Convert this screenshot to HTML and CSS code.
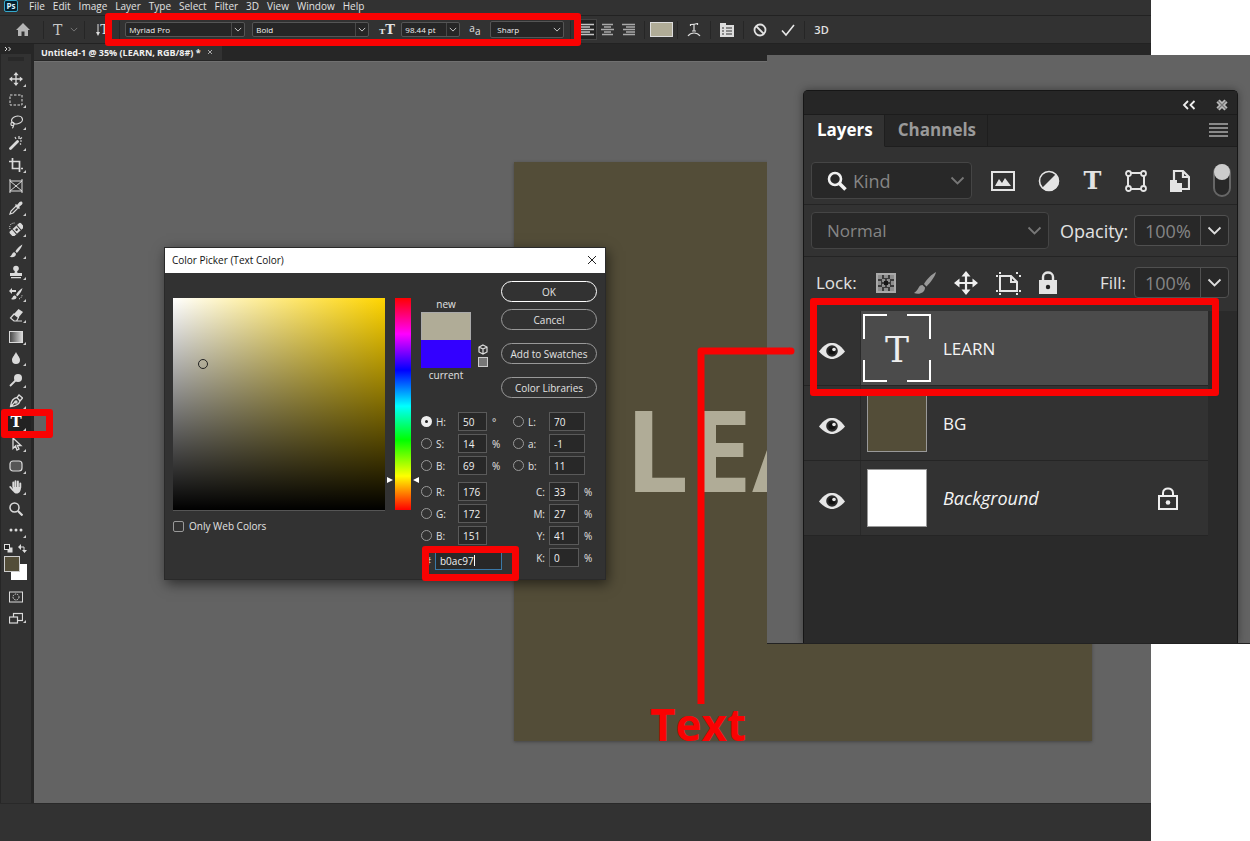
FILE: index.html
```html
<!DOCTYPE html>
<html lang="en">
<head>
<meta charset="utf-8">
<title>Untitled-1 @ 35% (LEARN, RGB/8#)</title>
<link rel="stylesheet" href="styles.css">
</head>
<body>
<svg class="defs" aria-hidden="true">
  <symbol id="chev" viewBox="0 0 10 6"><path d="M1 1l4 4 4-4" fill="none" stroke="currentColor" stroke-width="1.2"/></symbol>
  <symbol id="move" viewBox="0 0 24 24"><path d="M12 3v18M3 12h18" stroke="currentColor" stroke-width="2.2"/><path d="M12 0l4.500 5.500h-9zM12 24l-4.500-5.500h9zM0 12l5.500-4.500v9zM24 12l-5.500-4.500v9z" fill="currentColor"/></symbol>
  <symbol id="brush" viewBox="0 0 24 24"><path d="M23 1c-4 2-10 8-12 12l2.500 2.500C17 12 22 6 23 1zM9.500 14C5 14 6 19 1 22c5 2 11 0 11-5.500z" fill="currentColor"/></symbol>
  <symbol id="eye" viewBox="0 0 26 18"><path d="M0 9.500C5 2.500 9 1 13 1s8 1.500 13 8.500C21 15 17 17 13 17S5 15 0 9.500z" fill="#e6e6e6"/><circle cx="13" cy="9" r="5.800" fill="#2b2b2b"/><circle cx="13" cy="9" r="3.600" fill="#111"/><circle cx="15" cy="7.500" r="1.800" fill="#e6e6e6"/></symbol>
</svg>
<div class="screen">
<div class="app">
  <nav class="menubar" aria-label="Main menu">
    <span class="logo">Ps</span>
    <button>File</button><button>Edit</button><button>Image</button><button>Layer</button><button>Type</button><button>Select</button><button>Filter</button><button>3D</button><button>View</button><button>Window</button><button>Help</button>
  </nav>
  <div class="options">
    <button class="home" aria-label="Home"><svg width="14" height="14" viewBox="0 0 14 14"><path d="M7 0L0 7h2v6h3.500V8.500h3V13H12V7h2z" fill="#b5b5b5"/></svg></button>
    <i class="sep"></i>
    <button class="type-preset" aria-label="Type tool presets"><span class="serif-t">T</span><svg class="chev dim"><use href="#chev"/></svg></button>
    <i class="sep"></i>
    <button class="orient" aria-label="Text orientation"><svg width="4" height="12" viewBox="0 0 4 12"><path d="M2 0v9" stroke="#ddd"/><path d="M0 8h4L2 12z" fill="#ddd"/></svg><span class="serif-t">T</span></button>
    <i class="sep"></i>
    <div class="combo family"><select aria-label="Font family"><option>Myriad Pro</option></select><svg class="chev"><use href="#chev"/></svg></div>
    <div class="combo style"><select aria-label="Font style"><option>Bold</option></select><svg class="chev"><use href="#chev"/></svg></div>
    <span class="size-icon"><small>T</small>T</span>
    <div class="combo size"><input type="text" aria-label="Font size" value="98.44 pt"><svg class="chev"><use href="#chev"/></svg></div>
    <span class="aa-icon">a<small>a</small></span>
    <div class="combo aa plain"><select aria-label="Anti-aliasing"><option>Sharp</option></select><svg class="chev"><use href="#chev"/></svg></div>
    <i class="sep tight"></i>
    <button class="align on" aria-label="Left align"><svg width="13" height="13" viewBox="0 0 13 13"><path d="M0 1.500h13M0 4h9M0 6.500h13M0 9h9M0 11.500h13" stroke="#c4c4c4" stroke-width="1.600"/></svg></button>
    <button class="align" aria-label="Center"><svg width="13" height="13" viewBox="0 0 13 13"><path d="M1 1.500h11M3 4h7M0 6.500h13M3 9h7M1 11.500h11" stroke="#aaa" stroke-width="1.600"/></svg></button>
    <button class="align" aria-label="Right align"><svg width="13" height="13" viewBox="0 0 13 13"><path d="M0 1.500h13M4 4h9M1 6.500h12M4 9h9M1 11.500h12" stroke="#aaa" stroke-width="1.600"/></svg></button>
    <i class="sep"></i>
    <button class="color" aria-label="Text color"></button>
    <i class="sep"></i>
    <button class="opt" aria-label="Warp text"><svg width="14" height="14" viewBox="0 0 14 14" fill="none" stroke="#ddd" stroke-width="1.200"><path d="M3.500 3V1.500c3 0 4 0 7-1V2M7 1.500V8M5 8h4M1 13c3-4 9-4 12 0"/></svg></button>
    <i class="sep"></i>
    <button class="opt" aria-label="Character and paragraph panels"><svg width="14" height="14" viewBox="0 0 14 14"><path d="M0 0h6v2h8v12H0z" fill="#ddd"/><path d="M2 5h2M2 8h2M2 11h2M6 5h6M6 8h6M6 11h6" stroke="#333" stroke-width="1.200"/></svg></button>
    <i class="sep"></i>
    <button class="opt" aria-label="Cancel edits"><svg width="14" height="14" viewBox="0 0 14 14" fill="none" stroke="#e2e2e2" stroke-width="1.800"><circle cx="7" cy="7" r="5.500"/><path d="M3 3l8 8"/></svg></button>
    <button class="opt" aria-label="Commit edits"><svg width="14" height="14" viewBox="0 0 14 14" fill="none" stroke="#e8e8e8" stroke-width="1.600"><path d="M1 7.500l4 4.500L13 2"/></svg></button>
    <i class="sep"></i>
    <button class="three">3D</button>
  </div>
  <div class="work">
    <aside class="tools" aria-label="Tools">
      <button class="expand" aria-label="Expand"><svg width="8" height="6" viewBox="0 0 8 6"><path d="M1 1l2 2-2 2M4.500 1l2 2-2 2" fill="none" stroke="#ddd"/></svg></button>
      <div class="grip"></div>
      <div class="toollist">
        <button class="tool sub" aria-label="Move"><svg viewBox="0 0 24 24"><use href="#move"/></svg></button>
        <button class="tool sub" aria-label="Marquee"><svg viewBox="0 0 14 14"><rect x="1" y="2" width="12" height="10" fill="none" stroke="currentColor" stroke-dasharray="2.500 1.500"/></svg></button>
        <button class="tool sub" aria-label="Lasso"><svg viewBox="0 0 14 14" fill="none" stroke="currentColor" stroke-width="1.200"><ellipse cx="8" cy="5" rx="5.500" ry="3.800" transform="rotate(-12 8 5)"/><circle cx="3.500" cy="9" r="1.600"/><path d="M4 10c1 1 0 3-1 3"/></svg></button>
        <button class="tool sub" aria-label="Magic wand"><svg viewBox="0 0 14 14"><path d="M1.500 12.500l7-7" stroke="currentColor" stroke-width="2.800" stroke-linecap="round"/><path d="M6 1l1 2M10 0v3M13 5h-2M13 1.500L11 3M12 8.500l-1-1" stroke="currentColor" stroke-width="1.200"/></svg></button>
        <button class="tool sub" aria-label="Crop"><svg viewBox="0 0 14 14" fill="none" stroke="currentColor" stroke-width="1.700"><path d="M3.500 0v10.500H11M0 3.500h10.500V14M12 10.500h2"/></svg></button>
        <button class="tool" aria-label="Frame"><svg viewBox="0 0 14 14" fill="none" stroke="currentColor"><rect x="1" y="2" width="12" height="10"/><path d="M1 2l12 10M13 2L1 12M0 1h2M12 1h2M0 13h2M12 13h2"/></svg></button>
        <button class="tool sub" aria-label="Eyedropper"><svg viewBox="0 0 14 14"><path d="M1 13l1-3 5-5 2 2-5 5z" fill="none" stroke="currentColor" stroke-width="1.200"/><path d="M6 4l1-1 1 1 2.500-3c2-1.500 4 .5 2.500 2.500L10 6l1 1-1 1z" fill="currentColor"/></svg></button>
        <button class="tool sub" aria-label="Healing brush"><svg viewBox="0 0 14 14"><path d="M1 7C0 3 2 1 6 1" fill="none" stroke="currentColor" stroke-dasharray="1 1"/><g transform="rotate(-42 7.500 7.500)"><rect x="0" y="4.500" width="15" height="6.500" rx="1.500" fill="currentColor"/><path d="M4.500 4.500V11M10.500 4.500V11" stroke="#323232"/><circle cx="7.500" cy="7.700" r="1.300" fill="#323232"/></g></svg></button>
        <button class="tool sub" aria-label="Brush"><svg viewBox="0 0 24 24"><use href="#brush"/></svg></button>
        <button class="tool sub" aria-label="Clone stamp"><svg viewBox="0 0 14 14" fill="currentColor"><circle cx="7" cy="3.500" r="2.800"/><path d="M6 5h2l.5 3H13v3H1V8h4.500zM2 12h10v1.200H2z"/></svg></button>
        <button class="tool sub" aria-label="History brush"><svg viewBox="0 0 14 14"><path d="M13.500 1C10 3 8 6 7 8l1.500 1.300C10.500 7 13 4 13.500 1zM6 8.500c-2.500 0-2 2.500-4 3.500 3 1.500 6 0 5.500-2.200zM0 4l3-3v2h4v2H3v2z" fill="currentColor"/><path d="M10 12c2-1 3-2 3-4" fill="none" stroke="currentColor" stroke-dasharray="1 1"/></svg></button>
        <button class="tool sub" aria-label="Eraser"><svg viewBox="0 0 14 14"><path d="M5 6l4.500-5L14 4 9.500 9.500z" fill="currentColor"/><path d="M5 6L1.500 10 5 13h2.500l2-3.500zM7 13h6" fill="none" stroke="currentColor" stroke-width="1.200"/></svg></button>
        <button class="tool sub" aria-label="Gradient"><svg viewBox="0 0 14 14"><defs><linearGradient id="g"><stop stop-color="#444"/><stop offset="1" stop-color="#ddd"/></linearGradient></defs><rect x=".5" y="1.500" width="13" height="11" fill="url(#g)" stroke="currentColor"/></svg></button>
        <button class="tool sub" aria-label="Blur"><svg viewBox="0 0 14 14"><path d="M7 1c2 4 4 5.500 4 8a4 4 0 0 1-8 0c0-2.500 2-4 4-8z" fill="currentColor"/></svg></button>
        <button class="tool sub" aria-label="Dodge"><svg viewBox="0 0 14 14"><circle cx="9" cy="5" r="4" fill="currentColor"/><path d="M6.500 7.500L1 13" stroke="currentColor" stroke-width="1.800"/></svg></button>
        <button class="tool sub" aria-label="Pen"><svg viewBox="0 0 14 14" fill="none" stroke="currentColor" stroke-width="1.300"><path d="M1.500 12.500C2 8 4 4 8 3.500L11 7c-1 3.500-4 5-9.500 5.500zl5-5M8 3.500L10 1l3.500 3L11 7"/><circle cx="7" cy="8" r="1"/></svg></button>
        <button class="tool sub active" aria-label="Type"><span class="serif-t">T</span></button>
        <button class="tool sub" aria-label="Path selection"><svg viewBox="0 0 14 14" fill="none" stroke="currentColor" stroke-width="1.300"><path d="M4 1v10.500l2.500-2.500L8 13l2-1-1.700-3.500H12z"/></svg></button>
        <button class="tool sub" aria-label="Rounded rectangle"><svg viewBox="0 0 14 14"><rect x="1" y="2" width="12" height="10" rx="3" fill="#555" stroke="currentColor" stroke-width="1.200"/></svg></button>
        <button class="tool sub" aria-label="Hand"><svg viewBox="0 0 14 14" fill="none" stroke="currentColor" stroke-width="1.900" stroke-linecap="round"><path d="M4.300 7V2.500M6.500 7V1.200M8.900 7V1.500M11.300 7.500V3.500M1.300 7l3 3.500"/><path d="M4 7h8c0 4-1.500 6.500-4.500 6.500S4 11 4 9z" fill="currentColor" stroke="none"/></svg></button>
        <button class="tool" aria-label="Zoom"><svg viewBox="0 0 14 14" fill="none" stroke="currentColor"><circle cx="5.500" cy="5.500" r="4.500" stroke-width="1.500"/><path d="M9 9l4.500 4.500" stroke-width="2.200"/></svg></button>
        <button class="tool sub" aria-label="More tools"><svg viewBox="0 0 14 14" fill="currentColor"><circle cx="2" cy="7" r="1.500"/><circle cx="7" cy="7" r="1.500"/><circle cx="12" cy="7" r="1.500"/></svg></button>
      </div>
      <div class="swap">
        <button aria-label="Default colors"><svg width="9" height="9" viewBox="0 0 9 9"><rect x="3.500" y="3.500" width="5" height="5" fill="#ddd"/><rect x=".5" y=".5" width="5" height="5" fill="#222" stroke="#ddd"/></svg></button>
        <button aria-label="Switch colors"><svg width="9" height="9" viewBox="0 0 9 9"><path d="M1 3h5v4" fill="none" stroke="#ddd"/><path d="M0 3l3-3v6zM6.500 9l-2.500-3h5z" fill="#ddd"/></svg></button>
      </div>
      <div class="swatches"><button class="bgc" aria-label="Background color"></button><button class="fgc" aria-label="Foreground color"></button></div>
      <button class="tool mask" aria-label="Quick mask"><svg viewBox="0 0 14 14" fill="none" stroke="currentColor"><rect x=".5" y="2" width="13" height="10"/><circle cx="7" cy="7" r="3" stroke-dasharray="1.500 1"/></svg></button>
      <button class="tool sub" aria-label="Screen mode"><svg viewBox="0 0 14 14" stroke="currentColor" stroke-width="1.200" fill="#323232"><rect x="4.500" y="1.500" width="9" height="7"/><rect x=".5" y="5" width="8" height="6"/></svg></button>
    </aside>
    <main class="main">
      <div class="tabbar"><div class="doc-tab">Untitled-1 @ 35% (LEARN, RGB/8#) *<button aria-label="Close document"><svg width="6" height="6" viewBox="0 0 6 6"><path d="M1 1l4 4M5 1L1 5" stroke="#aaa"/></svg></button></div></div>
      <div class="canvas">
        <div class="artboard"><div class="art-text">LEARN</div></div>
        <section class="dialog" aria-label="Color Picker">
          <header>Color Picker (Text Color)<button aria-label="Close"><svg width="10" height="10" viewBox="0 0 10 10"><path d="M1 1l8 8M9 1L1 9" stroke="#222"/></svg></button></header>
          <div class="picker">
            <div class="pick-left">
              <div class="field"><i class="ring"></i></div>
              <label class="web"><input type="checkbox">Only Web Colors</label>
            </div>
            <div class="hue"><i class="arrow l"></i><i class="arrow r"></i></div>
            <div class="pick-right">
              <div class="upper">
                <div class="preview"><span>new</span><i class="new"></i><i class="cur"></i><span>current</span></div>
                <div class="warn"><svg width="10" height="11" viewBox="0 0 10 11" fill="none" stroke="#ddd" stroke-width="1.200"><path d="M5 1l4 2v5l-4 2-4-2V3zM1 3l4 2 4-2M5 5v5"/></svg><i></i></div>
                <div class="buttons"><button class="ok">OK</button><button>Cancel</button><button class="far">Add to Swatches</button><button class="far">Color Libraries</button></div>
              </div>
              <div class="values">
                <div class="col">
                  <div class="val"><input type="radio" name="c" id="rh" checked><label for="rh">H:</label><input type="text" aria-label="Hue" value="50"><span>°</span></div>
                  <div class="val"><input type="radio" name="c" id="rs"><label for="rs">S:</label><input type="text" aria-label="Saturation" value="14"><span>%</span></div>
                  <div class="val"><input type="radio" name="c" id="rb"><label for="rb">B:</label><input type="text" aria-label="Brightness" value="69"><span>%</span></div>
                  <div class="val group"><input type="radio" name="c" id="rr"><label for="rr">R:</label><input type="text" aria-label="Red" value="176"></div>
                  <div class="val"><input type="radio" name="c" id="rg"><label for="rg">G:</label><input type="text" aria-label="Green" value="172"></div>
                  <div class="val"><input type="radio" name="c" id="rbl"><label for="rbl">B:</label><input type="text" aria-label="Blue" value="151"></div>
                  <div class="hex"><label for="hex">#</label><div class="hexbox"><input type="text" id="hex" value="b0ac97"><i class="caret"></i></div></div>
                </div>
                <div class="col second">
                  <div class="val wide"><input type="radio" name="c" id="rl"><label for="rl">L:</label><input type="text" aria-label="Lightness" value="70"></div>
                  <div class="val wide"><input type="radio" name="c" id="ra"><label for="ra">a:</label><input type="text" aria-label="Lab a" value="-1"></div>
                  <div class="val wide"><input type="radio" name="c" id="rlb"><label for="rlb">b:</label><input type="text" aria-label="Lab b" value="11"></div>
                  <div class="val cmyk group"><label for="cc">C:</label><input type="text" id="cc" value="33"><span>%</span></div>
                  <div class="val cmyk"><label for="cm">M:</label><input type="text" id="cm" value="27"><span>%</span></div>
                  <div class="val cmyk"><label for="cy">Y:</label><input type="text" id="cy" value="41"><span>%</span></div>
                  <div class="val cmyk"><label for="ck">K:</label><input type="text" id="ck" value="0"><span>%</span></div>
                </div>
              </div>
            </div>
          </div>
        </section>
      </div>
    </main>
  </div>
  <footer class="status"></footer>
</div>

<div class="inset">
  <section class="panel" aria-label="Layers">
    <div class="panel-top">
      <button aria-label="Collapse"><svg width="14" height="10" viewBox="0 0 14 10"><path d="M6 1L2 5l4 4M12.500 1l-4 4 4 4" fill="none" stroke="#eee" stroke-width="1.800"/></svg></button>
      <button aria-label="Close"><svg width="12" height="12" viewBox="0 0 12 12"><path d="M2 2l8 8M10 2l-8 8" stroke="#bbb" stroke-width="4.500"/><path d="M2 2l8 8M10 2l-8 8" stroke="#777" stroke-width="1.200"/></svg></button>
    </div>
    <div class="tabs"><button class="current">Layers</button><button>Channels</button><button class="burger" aria-label="Panel menu"><svg width="19" height="14" viewBox="0 0 19 14"><path d="M0 1h19M0 5h19M0 9h19M0 13h19" stroke="#aaa" stroke-width="1.500"/></svg></button></div>
    <div class="row filter">
      <div class="drop kind"><svg class="mag" width="20" height="20" viewBox="0 0 20 20" fill="none" stroke="#f0f0f0"><circle cx="8" cy="8" r="6" stroke-width="2.600"/><path d="M12 12l6.500 6.500" stroke-width="3.600"/></svg><select aria-label="Filter kind"><option>Kind</option></select><svg class="chev big dim"><use href="#chev"/></svg></div>
      <div class="filters">
        <button aria-label="Pixel layers"><svg width="24" height="20" viewBox="0 0 24 20"><rect x="1" y="1" width="22" height="18" fill="none" stroke="#e4e4e4" stroke-width="2"/><path d="M4 15l4-7 3 4 3-5 6 8z" fill="#e4e4e4"/></svg></button>
        <button aria-label="Adjustment layers"><svg width="22" height="22" viewBox="0 0 22 22"><circle cx="11" cy="11" r="9.500" fill="none" stroke="#e4e4e4" stroke-width="1.600"/><path d="M18 4A9.900 9.900 0 1 1 4 18z" fill="#e4e4e4"/></svg></button>
        <button aria-label="Type layers"><span class="serif-t">T</span></button>
        <button aria-label="Shape layers"><svg width="22" height="22" viewBox="0 0 22 22" fill="none" stroke="#e4e4e4"><path d="M3 3h16v16H3z" stroke-width="2"/><g fill="#323232" stroke-width="1.800"><circle cx="3.500" cy="3.500" r="2.500"/><circle cx="18.500" cy="3.500" r="2.500"/><circle cx="3.500" cy="18.500" r="2.500"/><circle cx="18.500" cy="18.500" r="2.500"/></g></svg></button>
        <button aria-label="Smart objects"><svg width="20" height="24" viewBox="0 0 20 24"><path d="M4 11V2h9l6 6v12h-7M13 2v6h6" fill="none" stroke="#e4e4e4" stroke-width="2.200"/><path d="M0 11h7v3h5v9H0z" fill="#e4e4e4"/></svg></button>
        <button class="switch" aria-label="Toggle filtering"><i></i></button>
      </div>
    </div>
    <div class="row blend">
      <div class="drop normal"><select aria-label="Blend mode"><option>Normal</option></select><svg class="chev big dim"><use href="#chev"/></svg></div>
      <label for="op">Opacity:</label>
      <div class="pct"><input type="text" id="op" value="100%"><svg class="chev big"><use href="#chev"/></svg></div>
    </div>
    <div class="row lock">
      <span class="cap">Lock:</span>
      <div class="locks">
        <button aria-label="Lock transparent pixels"><svg width="20" height="20" viewBox="0 0 20 20"><path d="M1 1h18v18H1z" fill="#3c3c3c" stroke="#aaa" stroke-width="2"/><path d="M2 2h4v4H2zM14 2h4v4h-4zM6 6h3v3H6zM11 6h3v3h-3zM6 11h3v3H6zM11 11h3v3h-3zM2 14h4v4H2zM14 14h4v4h-4zM8 2h4v3H8zM2 8h3v4H2zM15 8h3v4h-3zM8 15h4v3H8z" fill="#8e8e8e"/><path d="M8 8h4v4H8z" fill="#161616"/></svg></button>
        <button class="grey" aria-label="Lock image pixels"><svg width="24" height="24"><use href="#brush"/></svg></button>
        <button aria-label="Lock position"><svg width="24" height="24"><use href="#move"/></svg></button>
        <button aria-label="Lock artboard nesting"><svg width="26" height="24" viewBox="0 0 26 24" fill="none" stroke="#e4e4e4" stroke-width="2"><path d="M5 5h11l6 6v9H5zM16 5v6h6"/><path d="M1 5h2M5 1v2M22 1v2M24 5h2M1 20h2M5 22v2M22 22v2M24 20h2"/></svg></button>
        <button aria-label="Lock all"><svg width="20" height="24" viewBox="0 0 20 24"><path d="M5 10V6c0-6 10-6 10 0v4" fill="none" stroke="#e4e4e4" stroke-width="2.400"/><path d="M1 9h18v14H1z" fill="#e4e4e4"/><circle cx="10" cy="16" r="2.200" fill="#222"/></svg></button>
      </div>
      <label for="fill">Fill:</label>
      <div class="pct"><input type="text" id="fill" value="100%"><svg class="chev big"><use href="#chev"/></svg></div>
    </div>
    <ul class="layers">
      <li class="selected"><button class="eye" aria-label="Toggle LEARN"><svg width="26" height="18"><use href="#eye"/></svg></button><div class="body"><div class="thumb type"><svg width="68" height="68" viewBox="0 0 68 68" fill="none" stroke="#fff" stroke-width="2"><path d="M1 25V1h23M44 1h23v24M67 46v21H44M24 67H1V46"/></svg><span class="serif-t">T</span></div><span class="name">LEARN</span></div></li>
      <li><button class="eye" aria-label="Toggle BG"><svg width="26" height="18"><use href="#eye"/></svg></button><div class="body"><div class="thumb olive"></div><span class="name">BG</span></div></li>
      <li><button class="eye" aria-label="Toggle Background"><svg width="26" height="18"><use href="#eye"/></svg></button><div class="body"><div class="thumb white"></div><span class="name"><em>Background</em></span><svg class="locked" width="20" height="23" viewBox="0 0 20 23" fill="none" stroke="#eee" stroke-width="2"><path d="M1 9h18v13H1zM5 9V6c0-6 10-6 10 0v3"/><circle cx="10" cy="15.500" r="2.300" fill="#eee" stroke="none"/></svg></div></li>
    </ul>
  </section>
</div>

<div class="mark mark-options"></div>
<div class="mark mark-tool"></div>
<div class="mark mark-hex"></div>
<div class="mark mark-layer"></div>
<svg class="leader" width="100" height="357" viewBox="0 0 100 357"><path d="M4 357V4h89" fill="none" stroke="#f90202" stroke-width="7" stroke-linejoin="round"/><circle cx="94" cy="4" r="3.500" fill="#f90202"/></svg>
<div class="caption">Text</div>
</div>
</body>
</html>
```
FILE: styles.css
```css
* { box-sizing: border-box; }
body { margin: 0; background: #fff; font-family: "Open Sans", "Noto Sans", sans-serif; font-size: 10px; color: #e2e2e2; }
button, input, select { font: inherit; color: inherit; margin: 0; padding: 0; border: 0; background: none; appearance: none; outline: 0; }
button { display: flex; align-items: center; justify-content: center; }
svg { display: block; flex: none; }
.defs { position: absolute; width: 0; height: 0; }
.screen { position: relative; min-height: 100vh; overflow: hidden; }
.app { display: flex; flex-direction: column; min-height: 100vh; margin-right: 99px; background: #323232; }

.menubar { display: flex; align-items: center; height: 15px; padding: 0 4px 3px; gap: 8px; }
.menubar button { line-height: 12px; }
.logo { width: 14px; height: 12px; margin-right: 3px; border: 1px solid #35a8cc; border-radius: 2px; background: #06202e; color: #d5f3ff; font-size: 8px; font-weight: 700; line-height: 10px; text-align: center; }

.options { display: flex; align-items: center; height: 29px; padding-left: 16px; border-top: 1px solid #222; border-bottom: 1px solid #222; }
.sep { width: 1px; height: 18px; background: #262626; margin: 0 9px; }
.sep.tight { margin: 0 6px; }
.home + .sep { margin: 0 9px 0 13px; }
.chev { width: 8px; height: 5px; color: #ccc; }
.chev.dim { color: #777; }
.chev.big { width: 15px; height: 9px; }
.serif-t { font-family: "DejaVu Serif", serif; line-height: 1; }
.type-preset { gap: 8px; }
.type-preset .serif-t { font-size: 14px; color: #c8c8c8; }
.type-preset + .sep { margin: 0 11px 0 6px; }
.orient .serif-t { font-size: 12px; }
.orient + .sep { margin: 0 5px 0 11px; }
.combo { display: flex; align-items: center; height: 15px; border: 1px solid #555; border-radius: 2px; background: #262626; font-size: 8px; margin-right: 7px; color: #f0f0f0; }
.combo select, .combo input { flex: 1; min-width: 0; height: 13px; padding-left: 3px; border-right: 1px solid #484848; }
.combo.plain select { border: 0; padding-left: 6px; }
.combo .chev { margin: 0 2px; }
.family { width: 120px; }
.style { width: 117px; margin-right: 10px; }
.size { width: 59px; margin-right: 9px; }
.aa { width: 74px; height: 17px; margin-right: 0; }
.size-icon { width: 22px; font: 700 13px/1 "DejaVu Serif", serif; }
.size-icon small { font-size: 8px; }
.aa-icon { width: 21px; font-size: 10px; line-height: 12px; }
.aa-icon small { font-size: 10px; vertical-align: sub; }
.align { width: 21px; height: 21px; }
.align.on { width: 20px; background: #222; border: 1px solid #444; }
.align + .sep { margin: 0 5px; }
.color { width: 23px; height: 15px; background: #b0ac97; border: 1px solid #ddd; }
.color + .sep { margin: 0 9px 0 4px; }
.opt + .opt { margin-left: 14px; }
.opt + .sep { margin: 0 9px; }
.three { font-size: 11px; font-weight: 600; }

.work { display: flex; flex: 1; }
.tools { display: flex; flex-direction: column; width: 34px; border-right: 3px solid #262626; border-left: 1px solid #262626; }
.expand { height: 10px; justify-content: flex-start; padding-left: 3px; background: #262626; }
.grip { height: 4px; width: 16px; margin: 3px 7px; background: #292929; }
.toollist { display: grid; grid-auto-rows: 1fr; height: 473px; margin-top: 4px; }
.tool { position: relative; width: 30px; color: #dadada; }
.tool svg { width: 14px; height: 14px; }
.tool .serif-t { font-size: 15px; font-weight: 700; color: #fff; }
.tool.active { background: #222; }
.sub::after { content: ""; position: absolute; right: 5px; bottom: 3px; border-left: 3px solid transparent; border-bottom: 3px solid #ccc; }
.swap { display: flex; gap: 5px; padding: 3px; }
.swatches { position: relative; height: 26px; }
.fgc, .bgc { position: absolute; width: 16px; height: 16px; }
.fgc { left: 3px; top: 0; background: #534d38; border: 1px solid #ccc; }
.bgc { left: 10px; top: 8px; background: #fff; }
.mask { margin: 8px 0; }
.main { display: flex; flex-direction: column; flex: 1; min-width: 0; }
.tabbar { height: 17px; background: #262626; }
.doc-tab { display: flex; align-items: center; gap: 6px; width: max-content; height: 16px; padding: 0 9px 0 7px; background: #323232; font-size: 9px; font-weight: 700; color: #f0f0f0; }
.canvas { position: relative; flex: 1; background: #636363; border-top: 1px solid #707070; }
.status { height: 38px; background: #323232; border-top: 1px solid #292929; }
.artboard { position: absolute; left: 480px; top: 100px; width: 578px; height: 579px; background: #534d38; box-shadow: 0 1px 3px #444; overflow: hidden; }
.art-text { width: 253px; padding: 210px 0 0 111px; color: #b0ac97; font-size: 113px; font-weight: 700; line-height: 152px; overflow: hidden; }

.dialog { position: absolute; left: 130px; top: 185px; width: 442px; height: 333px; background: #323232; border: 1px solid #2a2a2a; box-shadow: 2px 4px 12px #0008; }
.dialog header { display: flex; align-items: center; justify-content: space-between; height: 25px; padding: 0 8px 2px 7px; background: #fff; color: #111; }
.picker { display: flex; padding: 8px 8px 0; }
.pick-left { padding-top: 17px; }
.field { position: relative; width: 212px; height: 213px; border-bottom: 1px solid #555; background: linear-gradient(to top, #000, transparent), linear-gradient(to right, #fff, #ffd500); }
.ring { position: absolute; left: 25px; top: 61px; width: 10px; height: 10px; border: 1px solid #222; border-radius: 50%; }
.web { display: flex; align-items: center; gap: 5px; margin-top: 8px; }
.web input { width: 11px; height: 11px; border: 1px solid #999; border-radius: 2px; }
.hue { position: relative; width: 16px; height: 212px; margin: 17px 10px 0; background: linear-gradient(#f00, #f0f 17%, #00f 34%, #0ff 51%, #0f0 67%, #ff0 84%, #f00); }
.arrow { position: absolute; top: 179px; border: 3px solid transparent; }
.arrow.l { left: -8px; border-left: 6px solid #fff; border-right: 0; }
.arrow.r { right: -8px; border-right: 6px solid #fff; border-left: 0; }
.pick-right { flex: 1; }
.upper { display: flex; }
.preview { display: flex; flex-direction: column; align-items: center; width: 50px; padding-top: 16px; line-height: 15px; }
.preview .new { width: 50px; height: 28px; background: #b0ac97; border: 1px solid #aaa; border-bottom: 0; }
.preview .cur { width: 50px; height: 28px; background: #3300ff; }
.warn { display: flex; flex-direction: column; align-items: center; gap: 2px; width: 24px; padding-top: 63px; }
.warn i { width: 10px; height: 10px; background: #777; border: 1px solid #ccc; }
.buttons { display: flex; flex-direction: column; gap: 7px; flex: 1; margin-left: 6px; }
.buttons button { height: 21px; border: 1px solid #999; border-radius: 11px; }
.buttons .ok { border-color: #fff; }
.buttons .far { margin-top: 6px; }
.values { display: flex; justify-content: space-between; padding-top: 14px; }
.col { display: flex; flex-direction: column; gap: 3px; width: 84px; }
.val { display: grid; grid-template-columns: 15px 22px 29px 1fr; align-items: center; height: 19px; }
.val.group { margin-top: 4px; }
.val.wide { grid-template-columns: 15px 21px 36px; }
.val.cmyk { grid-template-columns: 36px 30px 1fr; }
.val.cmyk label { text-align: right; padding-right: 4px; }
.val span { padding-left: 5px; line-height: 12px; }
.val input[type="text"], .hexbox { width: 100%; height: 19px; padding-left: 4px; border: 1px solid #5a5a5a; background: #282828; color: #f0f0f0; }
input[type="radio"] { width: 11px; height: 11px; border: 1px solid #999; border-radius: 50%; }
input[type="radio"]:checked { border: 4px solid #eee; background: #222; }
.hex { display: flex; align-items: center; margin-top: 3px; }
.hex label { width: 14px; text-align: center; }
.hexbox { display: flex; align-items: center; width: 67px; border-color: #3a78a8; }
.hexbox input { width: 34px; }
.caret { width: 1px; height: 11px; background: #fff; }

.inset { position: absolute; right: 0; top: 55px; width: 483px; height: 589px; padding: 35px 12px 0 36px; background: #636363; border-bottom: 1px solid #222; overflow: hidden; }
.panel { display: flex; flex-direction: column; height: 100%; border: 1px solid #161616; border-bottom: 0; border-radius: 5px 5px 0 0; background: #323232; box-shadow: 0 0 8px #0006; font-size: 17px; overflow: hidden; }
.panel-top { display: flex; align-items: center; justify-content: flex-end; gap: 20px; height: 24px; padding: 4px 9px 0; background: #262626; border-bottom: 1px solid #1c1c1c; }
.tabs { display: flex; height: 32px; background: #262626; font-weight: 700; color: #9a9a9a; }
.tabs button { padding: 0 11px 2px 13px; border-right: 1px solid #1e1e1e; border-bottom: 1px solid #1e1e1e; }
.tabs .current { color: #fff; background: #323232; border-bottom-color: #323232; }
.tabs .burger { flex: 1; justify-content: flex-end; padding: 0 9px 2px 0; border-right: 0; }
.row { display: flex; align-items: center; height: 52px; padding: 0 8px 0 7px; border-bottom: 1px solid #242424; }
.filter { height: 58px; padding: 10px 6px 0 7px; }
.drop { display: flex; align-items: center; height: 37px; padding: 0 6px 0 15px; border: 1px solid #454545; border-radius: 4px; background: #282828; color: #858585; }
.drop select { flex: 1; min-width: 0; }
.kind { width: 161px; font-size: 18px; }
.kind .mag { margin-right: 6px; }
.filters { display: flex; align-items: center; justify-content: space-between; flex: 1; padding-left: 19px; }
.filters .serif-t { font-size: 24px; font-weight: 700; }
.filters .switch { width: 18px; height: 33px; align-items: flex-start; border: 2px solid #666; border-radius: 9px; background: #282828; }
.switch i { flex: none; width: 16px; height: 16px; margin-top: -2px; border-radius: 50%; background: #ccc; }
.normal { width: 238px; }
.blend label { flex: 1; padding-left: 11px; font-size: 18px; }
.pct { display: flex; align-items: center; width: 95px; height: 31px; border: 1px solid #505050; border-radius: 4px; background: #282828; font-size: 18px; color: #858585; }
.pct input { width: 66px; height: 29px; padding-left: 10px; border-right: 1px solid #505050; }
.pct .chev { margin: 0 auto; color: #ddd; }
.lock { height: 54px; padding-left: 12px; padding-bottom: 3px; border: 0; }
.locks { display: flex; align-items: center; gap: 17px; padding-left: 19px; }
.locks .grey { color: #999; }
.locks button { color: #f0f0f0; }
.lock label { flex: 1; padding-right: 8px; text-align: right; }
.layers { flex: 1; margin: 0; padding: 0 29px 0 0; list-style: none; background: #2a2a2a; }
.layers li { display: flex; height: 75px; background: #323232; border-bottom: 1px solid #252525; }
.eye { width: 57px; padding-top: 6px; border-right: 1px solid #292929; }
.body { display: flex; align-items: center; flex: 1; padding-left: 6px; }
.selected .body { padding-left: 2px; background: #4b4b4b; }
.thumb { width: 60px; height: 58px; border: 1px solid #999; }
.thumb.olive { background: #534d38; }
.thumb.white { background: #fff; }
.thumb.type { display: grid; place-items: center; width: 68px; height: 68px; border: 0; }
.thumb.type > * { grid-area: 1 / 1; }
.thumb .serif-t { font-size: 36px; padding-top: 4px; color: #eee; }
.name { flex: 1; padding-left: 16px; color: #f4f4f4; }
.name em { font-size: 18px; }
.selected .name { padding-left: 12px; }
.locked { margin-right: 30px; }

.mark { position: absolute; border: 7px solid #f90202; border-radius: 3px; }
.mark-options { left: 105px; top: 13px; width: 476px; height: 33px; }
.mark-tool { left: 1px; top: 409px; width: 52px; height: 29px; }
.mark-hex { left: 422px; top: 546px; width: 97px; height: 35px; }
.mark-layer { right: 31px; top: 298px; width: 409px; height: 98px; }
.leader { position: absolute; left: 697px; top: 347px; }
.caption { position: absolute; left: 650px; top: 693px; color: #f90202; font-size: 44px; font-weight: 700; line-height: 63px; }
```
